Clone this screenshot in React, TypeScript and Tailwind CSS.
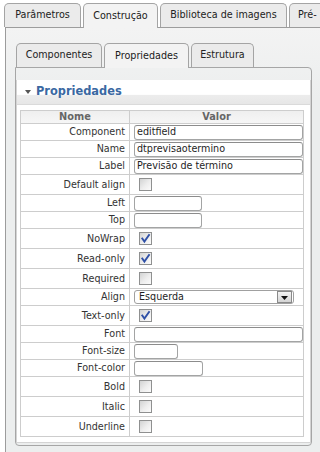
import React from "react";

type Row = {
  label: string;
  kind: "input" | "check" | "select";
  value?: string;
  w?: string;
  checked?: boolean;
};

const rows: Row[] = [
  { label: "Component", kind: "input", value: "editfield", w: "w-[169px]" },
  { label: "Name", kind: "input", value: "dtprevisaotermino", w: "w-[169px]" },
  { label: "Label", kind: "input", value: "Previsão de término", w: "w-[169px]" },
  { label: "Default align", kind: "check" },
  { label: "Left", kind: "input", value: "", w: "w-[68px]" },
  { label: "Top", kind: "input", value: "", w: "w-[68px]" },
  { label: "NoWrap", kind: "check", checked: true },
  { label: "Read-only", kind: "check", checked: true },
  { label: "Required", kind: "check" },
  { label: "Align", kind: "select", value: "Esquerda" },
  { label: "Text-only", kind: "check", checked: true },
  { label: "Font", kind: "input", value: "", w: "w-[169px]" },
  { label: "Font-size", kind: "input", value: "", w: "w-[44px]" },
  { label: "Font-color", kind: "input", value: "", w: "w-[69px]" },
  { label: "Bold", kind: "check" },
  { label: "Italic", kind: "check" },
  { label: "Underline", kind: "check" },
];

function Checkbox({ checked }: { checked?: boolean }) {
  return (
    <div className="w-[13px] h-[13px] border border-[#8f9090] bg-[linear-gradient(135deg,#d2d3d3_0%,#eeeeee_55%,#fbfbfb_100%)] flex items-center justify-center">
      {checked && (
        <svg width="11" height="11" viewBox="0 0 11 11">
          <path d="M2.3 5.6 L4.4 8.6 L9 2" stroke="#2f50a6" strokeWidth="1.9" fill="none" strokeLinecap="square" />
        </svg>
      )}
    </div>
  );
}

function TextBox({ value, w }: { value?: string; w?: string }) {
  return (
    <div
      className={`${w} h-[15px] border border-[#a3a4a4] border-t-[#8c8c8c] rounded-[3px] bg-white pl-[2px] flex items-center text-[9.6px] text-[#1e1e1e] leading-none whitespace-nowrap overflow-hidden`}
    >
      {value}
    </div>
  );
}

function SelectBox({ value }: { value?: string }) {
  return (
    <div className="w-[160px] h-[14px] border border-[#a0a0a0] rounded-[3px] bg-white flex items-center justify-between pl-[4px] pr-px text-[9.6px] text-[#1e1e1e] leading-none">
      <span>{value}</span>
      <div className="w-[15px] h-[12px] border border-[#8a8a8a] bg-[linear-gradient(#f4f4f4,#d4d4d4)] flex items-end justify-center pb-[2px]">
        <svg width="7" height="4" viewBox="0 0 7 4">
          <path d="M0 0 H7 L3.5 4 Z" fill="#111" />
        </svg>
      </div>
    </div>
  );
}

function Tab({ label, cls, active }: { label: string; cls: string; active?: boolean }) {
  return (
    <div
      className={
        active
          ? `${cls} h-[25px] -mb-px relative z-10 shrink-0 rounded-t-[5px] border border-b-0 border-[#a4a4a4] bg-[#f3f3f3] flex items-center justify-center text-[#1a1a1a] whitespace-nowrap`
          : `${cls} h-[24px] shrink-0 rounded-t-[5px] border border-b-0 border-[#a4a4a4] bg-[#ebebeb] flex items-center justify-center text-[#222] whitespace-nowrap`
      }
    >
      {label}
    </div>
  );
}

export default function App() {
  return (
    <div className="w-[320px] h-[452px] overflow-hidden bg-white font-['DejaVu_Sans',sans-serif] text-[9.6px] text-[#333]">
      {/* top tabs */}
      <div className="flex items-end gap-[2px] pl-[4px] pt-[3px] w-[420px]">
        <Tab label="Parâmetros" cls="w-[77px]" />
        <Tab label="Construção" cls="w-[75px]" active />
        <Tab label="Biblioteca de imagens" cls="w-[127px]" />
        <Tab label="Pré-" cls="w-[60px] justify-start pl-[8px]" />
      </div>

      {/* outer panel */}
      <div className="ml-[5px] w-[330px] h-[430px] border-l border-t border-[#9c9c9c] bg-[linear-gradient(#f3f3f3_0px,#eceeee_70px,#eceeee_100%)]">
        {/* inner tabs */}
        <div className="flex items-end gap-[2px] pl-[10px] pt-[15px]">
          <Tab label="Componentes" cls="w-[86px]" />
          <Tab label="Propriedades" cls="w-[85px]" active />
          <Tab label="Estrutura" cls="w-[63px]" />
        </div>

        {/* inner panel */}
        <div className="ml-[9px] w-[297px] border border-[#a6a6a6] rounded-tr-[4px] rounded-b-[4px] pt-[12px] pb-[2px]">
          <div className="border-x border-b border-[#d4d4d4] bg-white">
            {/* accordion header */}
            <div className="h-[25px] border-b border-[#dadada] bg-[linear-gradient(#ffffff_0%,#ffffff_60%,#ececec_64%,#e7e7e7_100%)] flex items-center pl-[8px] gap-[5px]">
              <svg width="6" height="4" viewBox="0 0 6 4">
                <path d="M0 0 H6 L3 4 Z" fill="#555" />
              </svg>
              <span className="text-[11.4px] font-bold text-[#3a68a2] leading-none">Propriedades</span>
            </div>

            {/* content */}
            <div className="pl-[3px] pt-[5px] pb-[5px]">
              <div className="w-[284px] border-l border-r border-t border-[#cdcdcd]">
                <div className="grid grid-cols-[109px_1fr] h-[13px] border-b border-[#cdcdcd] bg-[linear-gradient(#efefef,#f6f6f6)] text-[9.8px] font-bold text-[#666] leading-none">
                  <div className="border-r border-[#cdcdcd] flex items-center justify-center">Nome</div>
                  <div className="flex items-center justify-center">Valor</div>
                </div>
                {rows.map((r) => (
                  <div
                    key={r.label}
                    className={
                      r.kind === "check"
                        ? "grid grid-cols-[109px_1fr] h-[20px] border-b border-[#cdcdcd]"
                        : "grid grid-cols-[109px_1fr] h-[17px] border-b border-[#cdcdcd]"
                    }
                  >
                    <div className="border-r border-[#cdcdcd] flex items-center justify-end pr-[4px] leading-none text-[#333]">
                      {r.label}
                    </div>
                    {r.kind === "check" ? (
                      <div className="flex items-center pl-[9px]">
                        <Checkbox checked={r.checked} />
                      </div>
                    ) : r.kind === "select" ? (
                      <div className="flex items-center pl-[4px]">
                        <SelectBox value={r.value} />
                      </div>
                    ) : (
                      <div className="flex items-center pl-[4px]">
                        <TextBox value={r.value} w={r.w} />
                      </div>
                    )}
                  </div>
                ))}
              </div>
            </div>
          </div>
        </div>
      </div>
    </div>
  );
}
